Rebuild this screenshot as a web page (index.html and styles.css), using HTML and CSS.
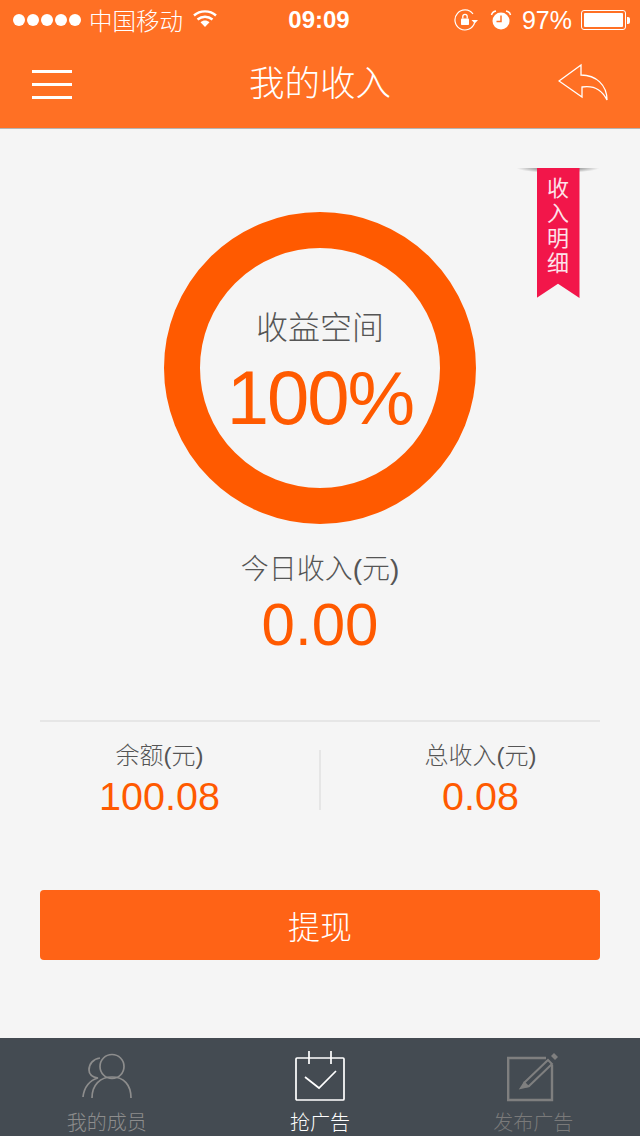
FILE: index.html
```html
<!DOCTYPE html>
<html lang="zh-CN">
<head>
<meta charset="utf-8">
<title>我的收入</title>
<link rel="stylesheet" href="styles.css">
</head>
<body>
<div class="app">
  <header class="top">
    <div class="status">
      <div class="status-left">
        <div class="signal"><i></i><i></i><i></i><i></i><i></i></div>
        <span class="carrier">中国移动</span>
        <svg class="wifi" width="26" height="20" viewBox="0 0 26 20"><path d="M2 6.500C8 1 18 1 24 6.500M5.500 10.500C10 6.800 16 6.800 20.500 10.500" fill="none" stroke="#fff" stroke-width="2.400"/><path d="M8.500 13.200C11.200 11 14.800 11 17.500 13.200L13 18Z" fill="#fff"/></svg>
      </div>
      <span class="clock">09:09</span>
      <div class="status-right">
        <svg class="lock" width="24" height="22" viewBox="0 0 24 22"><path d="M19 5A10 10 0 1 0 20.500 14" fill="none" stroke="#fff" stroke-width="1.200"/><path d="M17.500 11h6.500l-3.200 3.500z" fill="#fff"/><rect x="7" y="9.500" width="8" height="6.500" rx="0.800" fill="#fff"/><path d="M8.800 9.500V7.500a2.200 2.200 0 0 1 4.400 0v2" fill="none" stroke="#fff" stroke-width="1.300"/></svg>
        <svg class="alarm" width="22" height="22" viewBox="0 0 22 22"><circle cx="11" cy="12" r="8.500" fill="#fff"/><path d="M11 6.500V12.500H6.500" fill="none" stroke="#ff7024" stroke-width="1.500"/><path d="M1.500 6C2 3.500 3.500 2.500 6 2M20.500 6C20 3.500 18.500 2.500 16 2" fill="none" stroke="#fff" stroke-width="1.500"/></svg>
        <span class="pct">97%</span>
        <div class="battery"><div class="battery-fill"></div></div>
        <div class="battery-tip"></div>
      </div>
    </div>
    <nav class="nav">
      <div class="menu"><i></i><i></i><i></i></div>
      <h1 class="title">我的收入</h1>
      <svg class="back" width="52" height="38" viewBox="0 0 52 38"><path d="M1 18L23 2V12C38 12 49 22 49 37C44 27 36 22 24 24V34Z" fill="none" stroke="#fff" stroke-width="1.300"/></svg>
    </nav>
  </header>

  <main class="content">
    <div class="ribbon">
      <div class="ribbon-shadow"></div>
      <div class="ribbon-band">收入明细</div>
    </div>
    <div class="ring">
      <span class="ring-label">收益空间</span>
      <span class="ring-value">100%</span>
    </div>
    <div class="today">
      <span class="today-label">今日收入(元)</span>
      <span class="today-value">0.00</span>
    </div>
    <div class="rule"></div>
    <div class="stats">
      <div class="stat">
        <span class="stat-label">余额(元)</span>
        <span class="stat-value">100.08</span>
      </div>
      <div class="stat-divider"></div>
      <div class="stat">
        <span class="stat-label">总收入(元)</span>
        <span class="stat-value">0.08</span>
      </div>
    </div>
    <button class="withdraw">提现</button>
  </main>

  <footer class="tabs">
    <div class="tab tab-dim">
      <svg width="54" height="52" viewBox="0 0 54 52"><g fill="none" stroke="#8d8d8d" stroke-width="1.700"><circle cx="32" cy="15.500" r="12"/><path d="M12 47C12 34 20 26 32 26S51 34 51 47"/><path d="M20 7C13 8 9 13 9 19C9 23 12 26 18 27C10 29 4 36 3 46"/></g></svg>
      <span>我的成员</span>
    </div>
    <div class="tab tab-active">
      <svg width="52" height="52" viewBox="0 0 52 52"><g fill="none" stroke="#fff" stroke-width="1.700"><rect x="2" y="7" width="48" height="42" rx="1"/><path d="M15 0V13M37 0V13"/><path d="M11 26L25 37L42 20"/></g></svg>
      <span>抢广告</span>
    </div>
    <div class="tab tab-faint">
      <svg width="52" height="52" viewBox="0 0 52 52"><path d="M39 7H1.200V49H45V14" fill="none" stroke="#7f7f7f" stroke-width="2.400"/><path d="M18 31L41 9L45 13L22 35L14 37Z" fill="none" stroke="#7f7f7f" stroke-width="2"/><path d="M14 37L17 30L23 36Z" fill="#7f7f7f"/><path d="M44 5L47 2L51 6L48 9Z" fill="#7f7f7f"/></svg>
      <span>发布广告</span>
    </div>
  </footer>
</div>
</body>
</html>
```
FILE: styles.css
```css
* { box-sizing: border-box; margin: 0; padding: 0; }
html, body { width: 640px; height: 1136px; overflow: hidden; }
body { font-family: "Liberation Sans", "Noto Sans CJK SC", sans-serif; background: #f5f5f5; }
.app { display: flex; flex-direction: column; height: 1136px; }

.top { height: 129px; background: #ff7024; border-bottom: 1px solid #b4b4b4; color: #fff; flex: none; }
.status { height: 40px; display: flex; align-items: center; justify-content: space-between; padding: 0 10px 0 13px; position: relative; }
.status-left, .status-right { display: flex; align-items: center; }
.signal { display: flex; gap: 2px; margin-right: 8px; }
.signal i { width: 12px; height: 12px; border-radius: 50%; background: #fff; }
.carrier { font-size: 23.500px; font-weight: 300; }
.wifi { margin-left: 9px; margin-top: -2px; }
.clock { position: absolute; left: -2px; right: 0; text-align: center; font-size: 24px; font-weight: 700; }
.lock { margin-right: 12px; }
.alarm { margin-right: 10px; }
.pct { font-size: 25px; margin-right: 9px; }
.battery { width: 45px; height: 20px; border: 1px solid #fff; border-radius: 3px; padding: 2px; }
.battery-fill { height: 100%; background: #fff; border-radius: 1px; }
.battery-tip { width: 3px; height: 7px; background: #fff; border-radius: 0 2px 2px 0; margin-left: 1px; }

.nav { height: 88px; display: flex; align-items: center; justify-content: space-between; padding: 0 32px; position: relative; }
.menu { width: 40px; display: flex; flex-direction: column; gap: 10px; }
.menu i { display: block; height: 3px; background: #fff; }
.title { position: absolute; left: 0; right: 0; text-align: center; font-size: 35.500px; font-weight: 300; padding-bottom: 8px; }
.back { margin-right: -2px; margin-top: -4px; }

.content { flex: 1; position: relative; display: flex; flex-direction: column; align-items: center; padding-top: 83px; }
.ribbon { position: absolute; top: 39px; right: 40px; width: 84px; display: flex; flex-direction: column; align-items: center; }
.ribbon-shadow { position: absolute; top: 0; left: 0; right: 0; height: 5px; background: radial-gradient(ellipse at 50% 0, rgba(0,0,0,.7), rgba(0,0,0,0) 70%); }
.ribbon-band { width: 43px; height: 130px; background: #f2164a; color: #fde3e9; font-size: 22px; line-height: 25px; text-align: center; padding: 8px 10px 0; clip-path: polygon(0 0, 100% 0, 100% 100%, 50% 89%, 0 100%); }

.ring { width: 312px; height: 312px; border: 36px solid #ff5a00; border-radius: 50%; display: flex; flex-direction: column; align-items: center; flex: none; }
.ring-label { font-size: 32px; font-weight: 300; color: #555; line-height: 40px; margin-top: 60px; }
.ring-value { font-size: 76px; letter-spacing: -2px; color: #ff5a00; line-height: 84px; margin-top: 8px; }

.today { display: flex; flex-direction: column; align-items: center; margin-top: 28px; }
.today-label { font-size: 28px; font-weight: 300; color: #555; line-height: 36px; }
.today-value { font-size: 60px; color: #ff5a00; line-height: 66px; margin-top: 4px; }

.rule { width: 560px; height: 2px; background: #e6e6e6; margin-top: 62px; flex: none; }
.stats { width: 640px; height: 60px; display: flex; align-items: center; margin-top: 28px; flex: none; }
.stat { flex: 1; display: flex; flex-direction: column; align-items: center; }
.stat-divider { width: 2px; height: 60px; background: #e6e6e6; flex: none; }
.stat-label { font-size: 24px; font-weight: 300; color: #555; line-height: 28px; }
.stat-value { font-size: 39.500px; color: #ff5a00; line-height: 46px; margin-top: 3px; }

.withdraw { width: 560px; height: 70px; margin-top: 80px; border: 0; border-radius: 4px; background: #ff6316; color: #fff; font-family: inherit; font-size: 32px; font-weight: 300; flex: none; }

.tabs { height: 98px; background: #444b52; display: flex; flex: none; overflow: hidden; }
.tab { flex: 1; display: flex; flex-direction: column; align-items: center; padding-top: 13px; font-size: 20px; font-weight: 300; }
.tab span { line-height: 24px; margin-top: 8px; }
.tab-dim { color: #8d8d8d; }
.tab-active { color: #fff; }
.tab-faint { color: #7a7a7a; }
```
